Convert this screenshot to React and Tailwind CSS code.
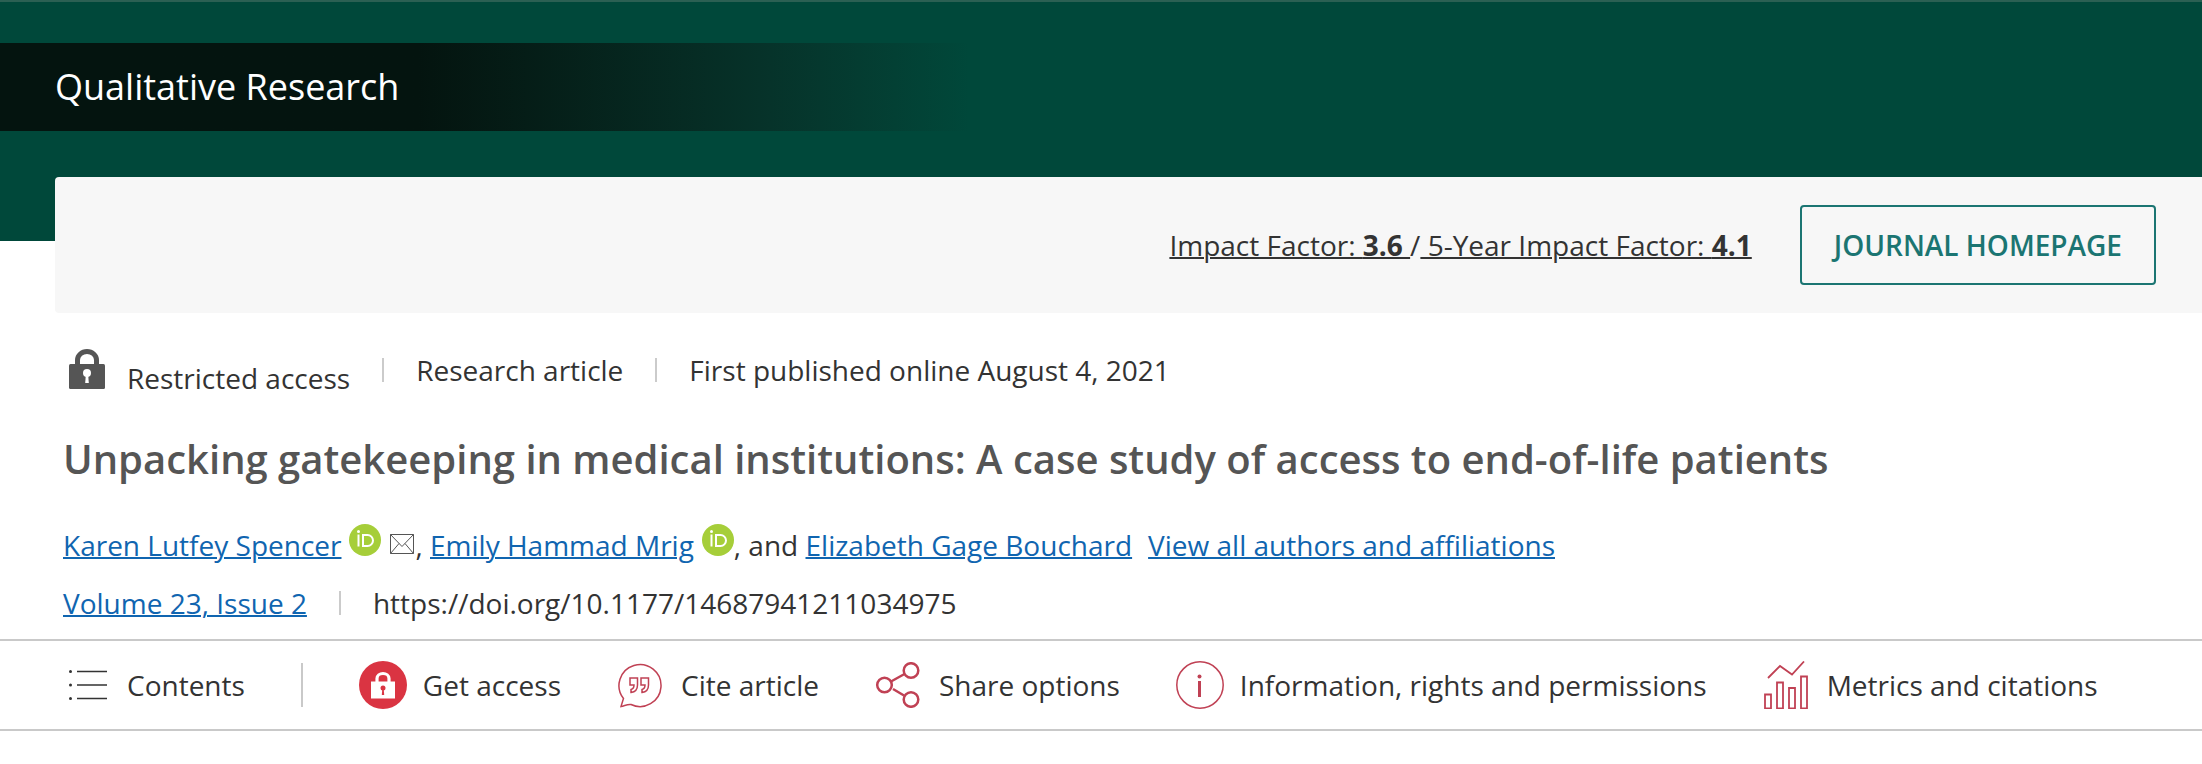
import React from "react";

const LockIcon = () => (
  <svg viewBox="0 0 36 40" className="h-10 w-9" aria-hidden="true">
    <path d="M8.500 17V11a9.500 8.500 0 0 1 19 0V17" fill="none" stroke="#555" strokeWidth="5" />
    <rect x="0" y="15" width="36" height="25" rx="1.500" fill="#555" />
    <circle cx="18" cy="24" r="4" fill="#fff" />
    <path d="M16.800 26h2.400l.6 8h-3.600z" fill="#fff" />
  </svg>
);

const OrcidIcon = () => (
  <svg viewBox="0 0 32 32" className="ml-2 size-8" aria-hidden="true">
    <circle cx="16" cy="16" r="16" fill="#a6ce39" />
    <g fill="none" stroke="#fff" strokeWidth="2">
      <path d="M9.500 10.500v12" />
      <path d="M14 11h4.500a5.500 5.500 0 0 1 0 11H14z" />
    </g>
    <circle cx="9.500" cy="7.500" r="1.500" fill="#fff" />
  </svg>
);

const MailIcon = () => (
  <svg viewBox="0 0 26 22" className="ml-2 h-[22px] w-[26px]" fill="none" stroke="#555" aria-hidden="true">
    <path d="M1.500 .5h23v19h-23zM1.500 .5 13 12.500 24.500 .5M1.500 19.500l8.500-10M24.500 19.500 16 9.500" />
  </svg>
);

const ContentsIcon = () => (
  <svg viewBox="0 0 38 32" className="h-8 w-[38px]" aria-hidden="true">
    <path d="M8 2.500h30M8 16h30M8 29.500h30" stroke="#333" strokeWidth="1.500" />
    <g fill="#333">
      <circle cx="1.500" cy="2.500" r="1.500" />
      <circle cx="1.500" cy="16" r="1.500" />
      <circle cx="1.500" cy="29.500" r="1.500" />
    </g>
  </svg>
);

const AccessIcon = () => (
  <svg viewBox="0 0 48 48" className="size-12" aria-hidden="true">
    <circle cx="24" cy="24" r="24" fill="#da3442" />
    <path d="M18 22v-4.500a6 5 0 0 1 12 0V22" fill="none" stroke="#fff" strokeWidth="3.200" />
    <path d="M12 20.500h24v17H12z" fill="#fff" />
    <circle cx="24" cy="27" r="2.500" fill="#da3442" />
    <path d="M23.300 28h1.400l.5 6h-2.400z" fill="#da3442" />
  </svg>
);

const CiteIcon = () => (
  <svg viewBox="0 0 48 46" className="h-[46px] w-12" fill="none" stroke="#c04154" strokeWidth="1.500" aria-hidden="true">
    <path d="M6.500 36.500A21 21 0 1 1 14 42.500C10 42 7.500 44 4 44.500z" />
    <path d="M13 16h7.500v7c0 4-2.500 7-6.500 7.500v-3c2-.5 3-2 3-4.500h-4zM24 16h7.500v7c0 4-2.500 7-6.500 7.500v-3c2-.5 3-2 3-4.500h-4z" />
  </svg>
);

const ShareIcon = () => (
  <svg viewBox="0 0 48 46" className="h-[46px] w-12" fill="none" stroke="#c04154" strokeWidth="2.500" aria-hidden="true">
    <circle cx="9.500" cy="23" r="7.300" />
    <circle cx="36" cy="8.500" r="7.300" />
    <circle cx="36" cy="37.500" r="7.300" />
    <path d="M16 19.500 29.500 12M18 27 29 33.500" />
  </svg>
);

const InfoIcon = () => (
  <svg viewBox="0 0 48 48" className="size-12" aria-hidden="true">
    <circle cx="24" cy="24" r="23.200" fill="none" stroke="#c04154" strokeWidth="1.500" />
    <circle cx="23.500" cy="15.500" r="2" fill="#c04154" />
    <path d="M23.500 20v16" stroke="#c04154" strokeWidth="3" />
  </svg>
);

const MetricsIcon = () => (
  <svg viewBox="0 0 48 48" className="size-12" fill="none" stroke="#c04154" strokeWidth="1.800" aria-hidden="true">
    <path d="M5 17 17 5l12 8.500L41 .5" />
    <path d="M2 33.500h6v14H2zM14 21.500h6v26h-6zM26 27h6v20.500h-6zM38 15.500h6v32h-6z" />
  </svg>
);

const tools = [
  { label: "Get access", icon: <AccessIcon /> },
  { label: "Cite article", icon: <CiteIcon /> },
  { label: "Share options", icon: <ShareIcon /> },
  { label: "Information, rights and permissions", icon: <InfoIcon /> },
  { label: "Metrics and citations", icon: <MetricsIcon /> },
];

const Divider = () => <span className="h-6 w-0.5 bg-[#cbcbcb]" />;

const TextLink = ({ href, children }) => (
  <a href={href} className="text-[#1065b0] underline decoration-2">
    {children}
  </a>
);

const App = () => {
  return (
    <div className="bg-white font-['Open_Sans',sans-serif] text-[28px] leading-9 text-[#333]">
      <header className="border-t-2 border-[#2b6053] bg-[#00483a] pt-[41px] pb-[110px]">
        <div className="bg-linear-to-r from-[#04140f] from-19% via-[#06332a] via-35% to-[#00483a] to-44% px-[55px] py-5">
          <p className="text-4xl leading-12 text-white">Qualitative Research</p>
        </div>
      </header>

      <section className="-mt-16 ml-[55px] flex items-center justify-end gap-12 rounded-l-sm bg-[#f7f7f7] py-7 pr-[46px]">
        <p>
          <a href="#impact" className="underline decoration-2">Impact Factor: <b>3.6 </b></a>/
          <a href="#impact5" className="underline decoration-2"> 5-Year Impact Factor: <b>4.1</b></a>
        </p>
        <button className="rounded-sm border-2 border-[#1b7572] px-8 py-5 font-semibold text-[#1b7572]">
          JOURNAL HOMEPAGE
        </button>
      </section>

      <main className="px-[63px] pt-9">
        <div className="flex items-center gap-8 pl-1.5">
          <div className="-mb-1.5 flex items-baseline gap-[22px]">
            <LockIcon />
            <span>Restricted access</span>
          </div>
          <Divider />
          <span>Research article</span>
          <Divider />
          <span>First published online August 4, 2021</span>
        </div>
        <h1 className="mt-[41px] text-[40px] leading-14 font-semibold text-[#555]">
          Unpacking gatekeeping in medical institutions: A case study of access to end-of-life patients
        </h1>
        <div className="mt-[37px] flex items-baseline">
          <TextLink href="#spencer">Karen Lutfey Spencer</TextLink>
          <OrcidIcon />
          <MailIcon />
          <span>,&nbsp;</span>
          <TextLink href="#mrig">Emily Hammad Mrig</TextLink>
          <OrcidIcon />
          <span className="mr-4">
            , and <TextLink href="#bouchard">Elizabeth Gage Bouchard</TextLink>
          </span>
          <TextLink href="#authors">View all authors and affiliations</TextLink>
        </div>
        <div className="mt-[22px] flex items-center gap-8">
          <TextLink href="#issue">Volume 23, Issue 2</TextLink>
          <Divider />
          <span>https://doi.org/10.1177/14687941211034975</span>
        </div>
      </main>

      <nav className="mt-[18px] flex items-center gap-14 border-y-2 border-[#c9c9c9] px-[69px] py-5">
        <button className="flex items-center gap-5">
          <ContentsIcon />
          Contents
        </button>
        <span className="h-11 w-0.5 bg-[#c9c9c9]" />
        {tools.map((tool) => (
          <button key={tool.label} className="flex items-center gap-4">
            {tool.icon}
            {tool.label}
          </button>
        ))}
      </nav>
    </div>
  );
};

export default App;
